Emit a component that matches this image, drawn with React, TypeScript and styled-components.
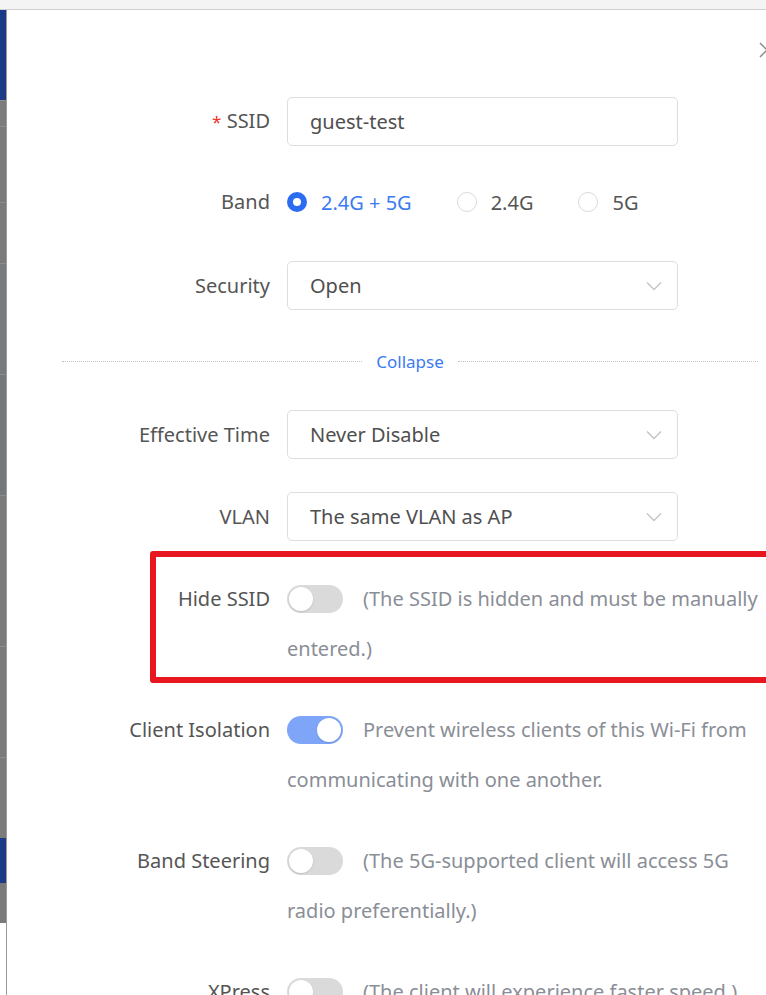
import React from 'react'
import styled, { createGlobalStyle } from 'styled-components';

const GlobalStyle = createGlobalStyle`
  html, body {
    margin: 0;
    padding: 0;
    background: #ffffff;
  }
  body {
    font-family: "Noto Sans", "Open Sans", Arial, sans-serif;
    overflow: hidden;
  }
`;

interface ToggleRowProps {
  label: string;
  on?: boolean;
  text: string;
}

function ToggleRow({ label, on, text }: ToggleRowProps) {
  return (
    <Row $tall>
      <Label $tall>{label}</Label>
      <Desc>
        <Switch $on={!!on}><Knob /></Switch>
        {text}
      </Desc>
    </Row>
  )
}

function Chevron() {
  return (
    <svg width="16" height="10" viewBox="0 0 16 10">
      <path d="M1 1.5 L8 8.5 L15 1.5" fill="none" stroke="#c4c4c4" strokeWidth="1.4" />
    </svg>
  )
}

function App() {
  return (
    <Page>
      <GlobalStyle />
      <TopBar />
      <Body>
        <Backdrop>
          <Segment $h={90} $color="#1d3a86" />
          <Segment $h={25} $color="#7c7c7c" $line />
          <Segment $h={75} $color="#7a7a7a" $line />
          <Segment $h={60} $color="#7b7b7b" $line />
          <Segment $h={110} $color="#767b80" $line />
          <Segment $h={120} $color="#73787d" $line />
          <Segment $h={150} $color="#7a7a7a" $line />
          <Segment $h={110} $color="#7a7a7a" $line />
          <Segment $h={80} $color="#7b7b7b" $line />
          <Segment $h={45} $color="#1d3a86" />
          <Segment $h={40} $color="#7a7a7a" />
        </Backdrop>
        <Drawer>
          <CloseButton>
            <svg width="16" height="16" viewBox="0 0 16 16">
              <path d="M1 1 L15 15 M15 1 L1 15" stroke="#8a8a8a" strokeWidth="1.5" fill="none" />
            </svg>
          </CloseButton>

          <Row>
            <Label><Req>*</Req> SSID</Label>
            <Input>guest-test</Input>
          </Row>

          <Row>
            <Label $lift>Band</Label>
            <Radios>
              <RadioItem $checked><Dot $checked />2.4G + 5G</RadioItem>
              <RadioItem><Dot />2.4G</RadioItem>
              <RadioItem><Dot />5G</RadioItem>
            </Radios>
          </Row>

          <Row>
            <Label>Security</Label>
            <Input>Open<Chevron /></Input>
          </Row>

          <Divider>
            <DashLine />
            <CollapseLink>Collapse</CollapseLink>
            <DashLine />
          </Divider>

          <Row>
            <Label>Effective Time</Label>
            <Input>Never Disable<Chevron /></Input>
          </Row>

          <Row>
            <Label>VLAN</Label>
            <Input>The same VLAN as AP<Chevron /></Input>
          </Row>

          <Highlight>
            <ToggleRow label="Hide SSID" text="(The SSID is hidden and must be manually entered.)" />
          </Highlight>

          <ToggleRow
            label="Client Isolation"
            on
            text="Prevent wireless clients of this Wi-Fi from communicating with one another."
          />

          <ToggleRow
            label="Band Steering"
            text="(The 5G-supported client will access 5G radio preferentially.)"
          />

          <ToggleRow
            label="XPress"
            text="(The client will experience faster speed.)"
          />
        </Drawer>
      </Body>
    </Page>
  )
}

const Page = styled.div`
  width: 766px;
  height: 995px;
  overflow: hidden;
  display: flex;
  flex-direction: column;
`;

const TopBar = styled.div`
  height: 9px;
  flex-shrink: 0;
  background: #f4f4f4;
  border-bottom: 1px solid #d0d0d0;
`;

const Body = styled.div`
  flex: 1;
  display: flex;
  min-height: 0;
`;

const Backdrop = styled.div`
  width: 6px;
  flex-shrink: 0;
  display: flex;
  flex-direction: column;
  border-right: 1px solid #9a9a9a;
`;

const Segment = styled.div<{ $h: number; $color: string; $line?: boolean }>`
  height: ${p => p.$h}px;
  flex-shrink: 0;
  background: ${p => p.$color};
  border-top: ${p => (p.$line ? '1px solid #8c8c8c' : 'none')};
`;

const Drawer = styled.div`
  position: relative;
  flex: 1;
  background: #ffffff;
  padding-top: 87px;
  display: flex;
  flex-direction: column;
`;

const CloseButton = styled.div`
  position: absolute;
  top: 32px;
  right: -8px;
  width: 16px;
  height: 16px;
  display: flex;
`;

const Row = styled.div<{ $tall?: boolean }>`
  display: grid;
  grid-template-columns: 263px 480px;
  column-gap: 17px;
  align-items: ${p => (p.$tall ? 'start' : 'center')};
  min-height: 49px;
  flex-shrink: 0;
  margin-bottom: ${p => (p.$tall ? 31 : 33)}px;
  position: relative;
`;

const Label = styled.div<{ $tall?: boolean; $lift?: boolean }>`
  text-align: right;
  font-size: 20px;
  color: #555555;
  line-height: ${p => (p.$tall ? '50px' : '28px')};
  white-space: nowrap;
  margin-top: ${p => (p.$lift ? '-3px' : '0')};
`;

const Req = styled.span`
  color: #f0302a;
  font-size: 17px;
`;

const Input = styled.div`
  box-sizing: border-box;
  width: 391px;
  height: 49px;
  border: 1px solid #dedede;
  border-radius: 5px;
  padding: 0 15px 0 22px;
  display: flex;
  align-items: center;
  justify-content: space-between;
  font-size: 20px;
  color: #4f4f4f;
`;

const Radios = styled.div`
  display: flex;
  align-items: center;
  height: 49px;
  margin-top: -3px;
`;

const RadioItem = styled.div<{ $checked?: boolean }>`
  display: flex;
  align-items: center;
  font-size: 20px;
  color: ${p => (p.$checked ? '#3b7bf2' : '#555555')};
  margin-right: 45px;
`;

const Dot = styled.span<{ $checked?: boolean }>`
  box-sizing: border-box;
  width: 20px;
  height: 20px;
  border-radius: 50%;
  margin-right: 14px;
  background: #ffffff;
  border: ${p => (p.$checked ? '6px solid #2c6cf2' : '1.5px solid #d9d9d9')};
`;

const Divider = styled.div`
  display: flex;
  align-items: center;
  flex-shrink: 0;
  height: 36px;
  margin: 0 9px 31px 55px;
  gap: 14px;
`;

const DashLine = styled.div`
  flex: 1;
  border-top: 1.5px dotted #c4c4c4;
`;

const CollapseLink = styled.span`
  font-size: 17px;
  color: #3b7bf2;
`;

const Desc = styled.div`
  font-size: 20px;
  line-height: 50px;
  color: #8a8e96;
`;

const Switch = styled.span<{ $on: boolean }>`
  display: inline-flex;
  align-items: center;
  vertical-align: middle;
  position: relative;
  top: -2px;
  box-sizing: border-box;
  width: 56px;
  height: 28px;
  border-radius: 14px;
  padding: 2px;
  margin-right: 20px;
  justify-content: ${p => (p.$on ? 'flex-end' : 'flex-start')};
  background: ${p => (p.$on ? '#7ea5f8' : '#dadada')};
`;

const Knob = styled.span`
  width: 24px;
  height: 24px;
  border-radius: 50%;
  background: #ffffff;
  box-shadow: 0 1px 2px rgba(0, 0, 0, 0.12);
`;

const Highlight = styled.div`
  position: relative;
  flex-shrink: 0;
  &::after {
    content: '';
    position: absolute;
    left: 143px;
    right: -30px;
    top: -23px;
    bottom: 22px;
    border: 6px solid #e8161f;
    border-radius: 3px;
    pointer-events: none;
  }
`;

export default App
